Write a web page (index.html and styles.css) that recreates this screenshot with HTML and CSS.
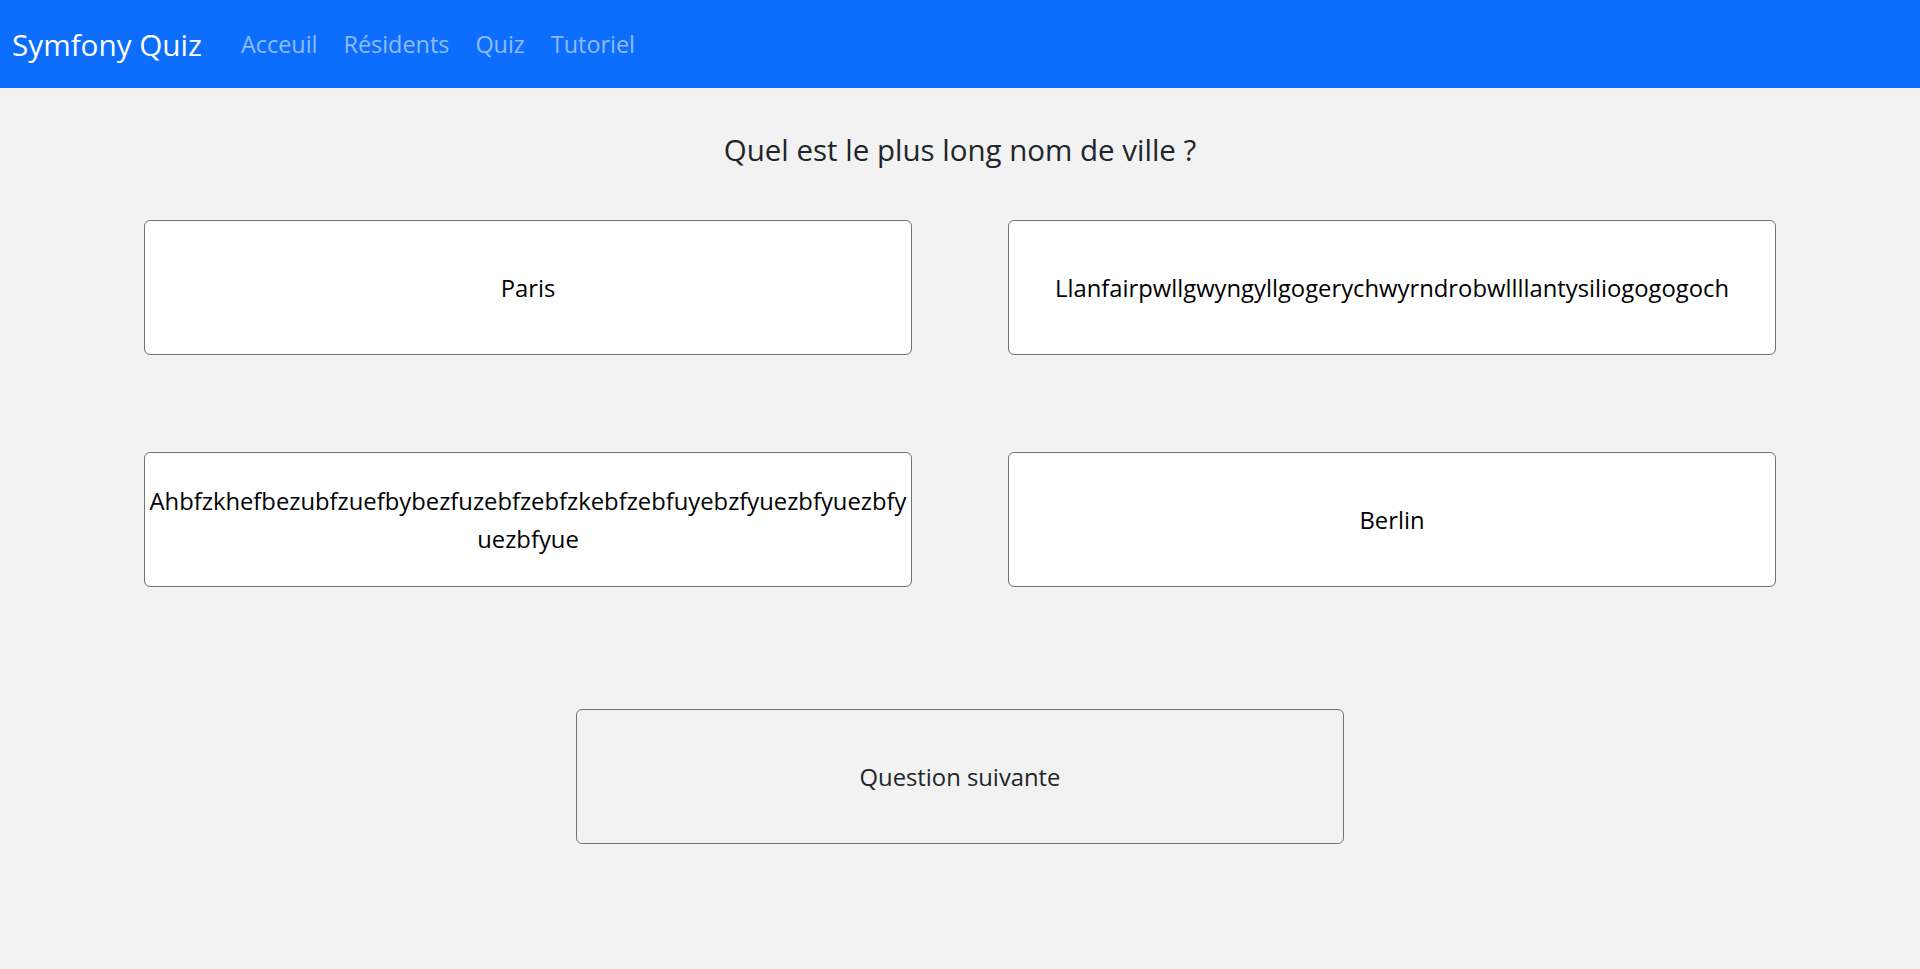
FILE: index.html
```html
<!DOCTYPE html>
<html lang="fr">
<head>
<meta charset="utf-8">
<title>Symfony Quiz</title>
<link rel="stylesheet" href="styles.css">
</head>
<body>
<nav class="navbar">
  <a class="brand" href="#">Symfony Quiz</a>
  <ul class="nav">
    <li><a class="nav-link" href="#">Acceuil</a></li>
    <li><a class="nav-link" href="#">Résidents</a></li>
    <li><a class="nav-link" href="#">Quiz</a></li>
    <li><a class="nav-link" href="#">Tutoriel</a></li>
  </ul>
</nav>
<main class="quiz">
  <h1 class="question">Quel est le plus long nom de ville ?</h1>
  <div class="answers">
    <button class="answer">Paris</button>
    <button class="answer">Llanfairpwllgwyngyllgogerychwyrndrobwllllantysiliogogogoch</button>
    <button class="answer">Ahbfzkhefbezubfzuefbybezfuzebfzebfzkebfzebfuyebzfyuezbfyuezbfy<wbr>uezbfyue</button>
    <button class="answer">Berlin</button>
  </div>
  <div class="next-row">
    <button class="next">Question suivante</button>
  </div>
</main>
</body>
</html>
```
FILE: styles.css
```css
html, body {
  margin: 0;
  padding: 0;
}
body {
  background: #f2f2f2;
  font-family: "Open Sans", "Noto Sans", sans-serif;
  color: #212529;
  font-size: 24px;
}
.navbar {
  background: #0d6efd;
  height: 88px;
  display: flex;
  align-items: center;
  padding: 0 12px;
  box-sizing: border-box;
}
.brand {
  color: #fff;
  text-decoration: none;
  font-size: 29.7px;
  margin-right: 26px;
}
.nav {
  list-style: none;
  display: flex;
  margin: 0;
  padding: 0;
  gap: 0;
}
.nav-link {
  display: block;
  padding: 0 13px;
  color: rgba(255, 255, 255, 0.55);
  text-decoration: none;
  font-size: 23.4px;
}
.quiz {
  display: flex;
  flex-direction: column;
  align-items: center;
}
.question {
  font-weight: 400;
  font-size: 29.5px;
  margin: 43px 0 0;
  line-height: 38px;
  height: 38px;
}
.answers {
  display: grid;
  grid-template-columns: 768px 768px;
  column-gap: 96px;
  row-gap: 97px;
  margin-top: 51px;
}
.answer, .next {
  height: 135px;
  width: 768px;
  border: 1px solid #6c757d;
  border-radius: 6px;
  background: #fff;
  color: #000;
  font-family: inherit;
  font-size: 23.8px;
  line-height: 38px;
  padding: 0 2px;
  overflow-wrap: anywhere;
  box-sizing: border-box;
}
.next-row {
  margin-top: 122px;
}
.next {
  background: transparent;
  color: #212529;
}
```
